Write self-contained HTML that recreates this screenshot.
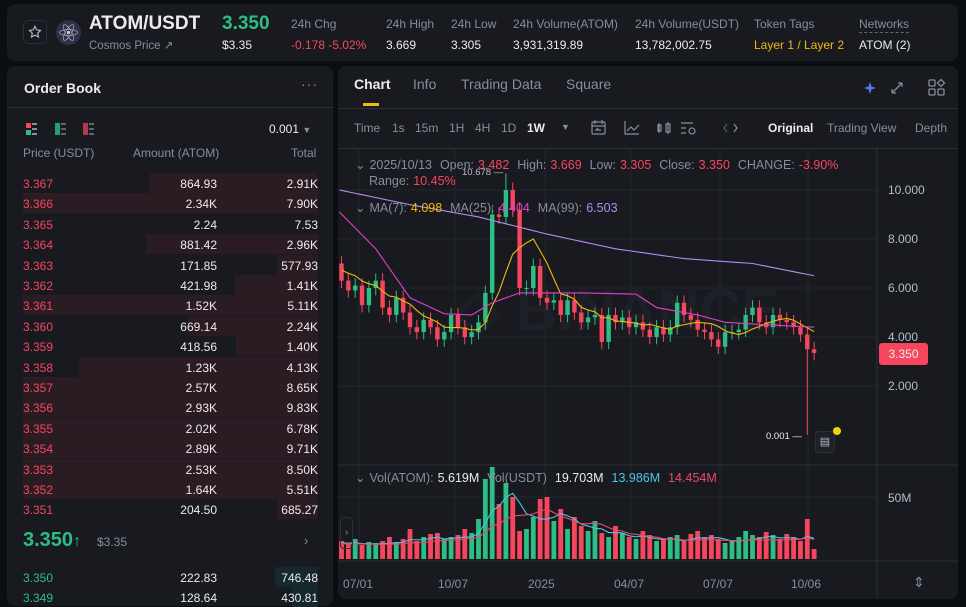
<!DOCTYPE html>
<html><head><meta charset="utf-8">
<style>
*{margin:0;padding:0;box-sizing:border-box}
body{width:966px;height:603px;background:#0b0e11;font-family:"Liberation Sans",sans-serif;color:#eaecef;position:relative;overflow:hidden;font-size:12px}
.p{position:absolute;background:#181a20;border-radius:8px}
.a{position:absolute;white-space:nowrap}
.g{color:#848e9c}.gr{color:#2ebd85}.rd{color:#f6465d}.y{color:#f0b90b}
.row{position:absolute;left:23px;width:295px;height:20px;font-size:12px}
.row .bar{position:absolute;top:0;right:0;height:20px;background:#2b1c23}
.row span{position:absolute;top:4px}
.lg{font-size:12.5px;word-spacing:0.5px}
</style></head><body>
<div class="p" style="left:7px;top:4px;width:951px;height:57px"></div>
<div class="a" style="left:23px;top:20px;width:24px;height:24px;border:1px solid #2b3139;border-radius:5px"></div>
<svg class="a" style="left:28px;top:25px" width="14" height="14" viewBox="0 0 14 14"><path d="M7 1.3l1.7 3.6 3.9.5-2.9 2.7.8 3.9L7 10.1 3.5 12l.8-3.9L1.4 5.4l3.9-.5z" fill="none" stroke="#b7bdc6" stroke-width="1.1"/></svg>
<svg class="a" style="left:56px;top:20px" width="25" height="25" viewBox="0 0 25 25"><circle cx="12.5" cy="12.5" r="12.5" fill="#2e3148"/><ellipse cx="12.5" cy="12.5" rx="9" ry="3" fill="none" stroke="#aab" stroke-width=".7"/><ellipse cx="12.5" cy="12.5" rx="9" ry="3" fill="none" stroke="#aab" stroke-width=".7" transform="rotate(60 12.5 12.5)"/><ellipse cx="12.5" cy="12.5" rx="9" ry="3" fill="none" stroke="#aab" stroke-width=".7" transform="rotate(-60 12.5 12.5)"/><circle cx="12.5" cy="12.5" r="1.6" fill="#ccd"/></svg>
<div class="a" style="left:89px;top:13px;font-size:19px;font-weight:bold">ATOM/USDT</div>
<div class="a g" style="left:89px;top:38px;font-size:11.5px">Cosmos Price ↗</div>
<div class="a gr" style="left:222px;top:13px;font-size:19px;font-weight:bold">3.350</div>
<div class="a" style="left:222px;top:38px;font-size:12px">$3.35</div>
<div class="a g" style="left:291px;top:17px">24h Chg</div><div class="a rd" style="left:291px;top:38px">-0.178 -5.02%</div>
<div class="a g" style="left:386px;top:17px">24h High</div><div class="a" style="left:386px;top:38px">3.669</div>
<div class="a g" style="left:451px;top:17px">24h Low</div><div class="a" style="left:451px;top:38px">3.305</div>
<div class="a g" style="left:513px;top:17px">24h Volume(ATOM)</div><div class="a" style="left:513px;top:38px">3,931,319.89</div>
<div class="a g" style="left:635px;top:17px">24h Volume(USDT)</div><div class="a" style="left:635px;top:38px">13,782,002.75</div>
<div class="a g" style="left:754px;top:17px">Token Tags</div><div class="a y" style="left:754px;top:38px">Layer 1 / Layer 2</div>
<div class="a g" style="left:859px;top:17px;border-bottom:1px dashed #5e6673;padding-bottom:1px">Networks</div><div class="a" style="left:859px;top:38px">ATOM (2)</div>

<div class="p" style="left:7px;top:66px;width:326px;height:540px"></div>
<div class="a" style="left:24px;top:80px;font-size:14px;font-weight:bold">Order Book</div>
<div class="a g" style="left:301px;top:76px;font-size:14px;letter-spacing:1px">···</div>
<div class="a" style="left:7px;top:107px;width:326px;height:1px;background:#2b3139"></div>
<svg class="a" style="left:26px;top:123px" width="70" height="12"><rect x="0" y="0" width="5" height="5" fill="#f6465d"/><rect x="0" y="7" width="5" height="5" fill="#2ebd85"/><rect x="6" y="0" width="5" height="2" fill="#848e9c"/><rect x="6" y="5" width="5" height="2" fill="#848e9c"/><rect x="6" y="10" width="5" height="2" fill="#848e9c"/><rect x="29" y="0" width="5" height="12" fill="#2ebd85" opacity=".8"/><rect x="35" y="0" width="5" height="2" fill="#5e6673"/><rect x="35" y="5" width="5" height="2" fill="#5e6673"/><rect x="35" y="10" width="5" height="2" fill="#5e6673"/><rect x="57" y="0" width="5" height="12" fill="#f6465d" opacity=".7"/><rect x="63" y="0" width="5" height="2" fill="#5e6673"/><rect x="63" y="5" width="5" height="2" fill="#5e6673"/><rect x="63" y="10" width="5" height="2" fill="#5e6673"/></svg>
<div class="a" style="left:269px;top:122px">0.001 <span class="g" style="font-size:9px">▼</span></div>
<div class="a g" style="left:23px;top:146px">Price (USDT)</div>
<div class="a g" style="left:133px;top:146px">Amount (ATOM)</div>
<div class="a g" style="left:291px;top:146px">Total</div>
<div id="ob"></div>
<div class="a gr" style="left:23px;top:529px;font-size:20px;font-weight:bold">3.350<span style="font-size:16px">↑</span></div>
<div class="a g" style="left:97px;top:535px">$3.35</div>
<div class="a g" style="left:304px;top:533px;font-size:13px">›</div>

<div class="p" style="left:338px;top:66px;width:620px;height:533px"></div>
<div class="a" style="left:354px;top:76px;font-size:14px;font-weight:bold">Chart</div>
<div class="a" style="left:363px;top:103px;width:16px;height:3px;background:#f0b90b"></div>
<div class="a g" style="left:413px;top:76px;font-size:14px">Info</div>
<div class="a g" style="left:461px;top:76px;font-size:14px">Trading Data</div>
<div class="a g" style="left:566px;top:76px;font-size:14px">Square</div>
<svg class="a" style="left:862px;top:79px" width="90" height="18"><path d="M8 3l1.5 4.5L14 9l-4.5 1.5L8 15l-1.5-4.5L2 9l4.5-1.5z" fill="#4e7cf6"/><path d="M30 14l10-10M30 14v-4M30 14h4M40 4h-4M40 4v4" stroke="#848e9c" stroke-width="1.3" fill="none"/><rect x="67" y="1" width="6" height="6" rx="1" fill="none" stroke="#848e9c" stroke-width="1.3"/><rect x="67" y="10" width="6" height="6" rx="1" fill="none" stroke="#848e9c" stroke-width="1.3"/><rect x="76" y="10" width="6" height="6" rx="1" fill="none" stroke="#848e9c" stroke-width="1.3"/><path d="M79 0.5l3.5 3.5L79 7.5 75.5 4z" fill="none" stroke="#848e9c" stroke-width="1.3"/></svg>
<div class="a" style="left:338px;top:108px;width:620px;height:1px;background:#2b3139"></div>
<div class="a g" style="left:354px;top:121px">Time</div>
<div class="a g" style="left:392px;top:121px">1s</div>
<div class="a g" style="left:415px;top:121px">15m</div>
<div class="a g" style="left:449px;top:121px">1H</div>
<div class="a g" style="left:475px;top:121px">4H</div>
<div class="a g" style="left:501px;top:121px">1D</div>
<div class="a" style="left:527px;top:121px;font-weight:bold">1W</div>
<div class="a g" style="left:561px;top:122px;font-size:9px">▼</div>
<svg class="a" style="left:590px;top:119px" width="155" height="18" fill="none" stroke="#848e9c" stroke-width="1.2"><rect x="2" y="3" width="13" height="12" rx="1"/><path d="M2 7h13M5 1v4M12 1v4M11 11H6l2-2"/><path d="M35 2v13h14M37 12l4-4 3 3 5-5"/><path d="M69 4v10M68 6h3v6h-3zM78 3v12M76 5h4v8h-4z"/><path d="M91 4h12M91 9h5M91 14h5"/><circle cx="102" cy="12" r="3"/><path d="M137 5l-3 4 3 4" opacity=".5"/><path d="M144 5l3 4-3 4"/></svg>
<div class="a" style="left:768px;top:121px;font-weight:bold">Original</div>
<div class="a g" style="left:827px;top:121px">Trading View</div>
<div class="a g" style="left:915px;top:121px">Depth</div>
<div class="a" style="left:338px;top:148px;width:620px;height:1px;background:#2b3139"></div>

<svg id="ch" class="a" style="left:0;top:0" width="966" height="603"></svg>

<div class="a g lg" style="left:355px;top:157px">⌄ 2025/10/13 &nbsp;Open: <span class="rd">3.482</span> &nbsp;High: <span class="rd">3.669</span> &nbsp;Low: <span class="rd">3.305</span> &nbsp;Close: <span class="rd">3.350</span> &nbsp;CHANGE: <span class="rd">-3.90%</span></div>
<div class="a g lg" style="left:369px;top:174px">Range: <span class="rd">10.45%</span></div>
<div class="a" style="left:462px;top:167px;font-size:9.5px;color:#b7bdc6">10.678 —</div>
<div class="a g lg" style="left:355px;top:200px">⌄ MA(7): <span class="y">4.098</span> &nbsp;MA(25): <span style="color:#e040c8">4.404</span> &nbsp;MA(99): <span style="color:#b58cf0">6.503</span></div>
<div class="a g lg" style="left:355px;top:470px">⌄ Vol(ATOM): <span style="color:#eaecef">5.619M</span> &nbsp;Vol(USDT) &nbsp;<span style="color:#eaecef">19.703M</span> &nbsp;<span style="color:#4fc3e0">13.986M</span> &nbsp;<span style="color:#e84a6e">14.454M</span></div>
<div class="a" style="left:888px;top:183px;font-size:12px;color:#b7bdc6">10.000</div>
<div class="a" style="left:888px;top:232px;font-size:12px;color:#b7bdc6">8.000</div>
<div class="a" style="left:888px;top:281px;font-size:12px;color:#b7bdc6">6.000</div>
<div class="a" style="left:888px;top:330px;font-size:12px;color:#b7bdc6">4.000</div>
<div class="a" style="left:888px;top:379px;font-size:12px;color:#b7bdc6">2.000</div>
<div class="a" style="left:888px;top:491px;font-size:12px;color:#b7bdc6">50M</div>
<div class="a" style="left:879px;top:343px;width:49px;height:22px;background:#f6465d;border-radius:3px;font-size:12px;text-align:center;line-height:22px">3.350</div>
<div class="a" style="left:766px;top:431px;font-size:9.5px">0.001 —</div>
<div class="a" style="left:815px;top:431px;width:20px;height:22px;border:1px solid #2b3139;border-radius:4px;background:#1e2026;color:#b7bdc6;font-size:11px;text-align:center;line-height:20px">▤</div>
<div class="a" style="left:833px;top:427px;width:8px;height:8px;border-radius:50%;background:#f0d20b"></div>
<div class="a" style="left:340px;top:517px;width:13px;height:32px;border:1px solid #2b3139;border-radius:4px;color:#848e9c;font-size:10px;text-align:center;line-height:30px">›</div>
<div class="a g" style="left:343px;top:577px">07/01</div>
<div class="a g" style="left:438px;top:577px">10/07</div>
<div class="a g" style="left:528px;top:577px">2025</div>
<div class="a g" style="left:614px;top:577px">04/07</div>
<div class="a g" style="left:703px;top:577px">07/07</div>
<div class="a g" style="left:791px;top:577px">10/06</div>
<div class="a g" style="left:913px;top:574px;font-size:14px">⇕</div>

<script>
var ob=[["3.367","864.93","2.91K",150],["3.366","2.34K","7.90K",23],["3.365","2.24","7.53",318],["3.364","881.42","2.96K",147],["3.363","171.85","577.93",278],["3.362","421.98","1.41K",235],["3.361","1.52K","5.11K",23],["3.360","669.14","2.24K",188],["3.359","418.56","1.40K",236],["3.358","1.23K","4.13K",79],["3.357","2.57K","8.65K",23],["3.356","2.93K","9.83K",23],["3.355","2.02K","6.78K",23],["3.354","2.89K","9.71K",23],["3.353","2.53K","8.50K",23],["3.352","1.64K","5.51K",23],["3.351","204.50","685.27",277]];
var h="";
ob.forEach(function(r,i){var t=173+i*20.4;h+='<div class="row" style="top:'+t+'px"><div class="bar" style="width:'+(318-r[3])+'px"></div><span class="rd" style="left:0">'+r[0]+'</span><span style="right:101px">'+r[1]+'</span><span style="right:0">'+r[2]+'</span></div>';});
[["3.350","222.83","746.48",275],["3.349","128.64","430.81",292]].forEach(function(r,i){var t=567+i*20.4;h+='<div class="row" style="top:'+t+'px"><div class="bar" style="background:#16292a;width:'+(318-r[3])+'px"></div><span class="gr" style="left:0">'+r[0]+'</span><span style="right:101px">'+r[1]+'</span><span style="right:0">'+r[2]+'</span></div>';});
document.getElementById("ob").innerHTML=h;
var C=[6.3,5.9,6.1,5.3,6.0,6.3,5.2,4.9,5.6,5.0,4.4,4.2,4.7,4.4,3.9,4.2,4.9,4.4,4.0,4.2,4.6,5.8,9.0,8.9,10.0,9.2,6.0,6.0,6.9,5.6,5.4,5.5,4.9,5.5,5.0,4.6,4.8,4.9,3.8,4.9,4.6,4.8,4.4,4.6,4.3,4.0,4.4,4.1,4.4,5.4,4.9,4.7,4.3,4.2,3.9,3.6,4.2,4.2,4.3,4.9,5.2,4.6,4.4,4.9,4.7,4.6,4.4,4.1,3.5,3.35];
var V=[18,16,20,14,17,16,18,22,17,20,30,18,22,25,26,20,22,24,30,26,40,80,92,55,76,62,28,30,42,60,62,38,50,30,42,33,28,38,26,22,33,26,22,20,28,24,18,20,22,24,18,25,28,22,24,20,16,18,22,28,24,22,27,24,20,25,22,18,40,10];
function X(i){return 341.5+i*6.85}function Y(p){return 435-24.5*p}
var s="";
[190,239,288,337,386].forEach(function(y){s+='<line x1="338" x2="877" y1="'+y+'" y2="'+y+'" stroke="#22252b"/>'});
s+='<line x1="338" x2="877" y1="497" y2="497" stroke="#22252b"/>';
[359,455,545,631,720,808].forEach(function(x){s+='<line x1="'+x+'" x2="'+x+'" y1="149" y2="561" stroke="#22252b"/>'});
s+='<line x1="877" x2="877" y1="149" y2="598" stroke="#2b3139"/><line x1="338" x2="958" y1="465" y2="465" stroke="#2b3139"/><line x1="338" x2="958" y1="561" y2="561" stroke="#2b3139"/>';
s+='<text x="455" y="330" font-family="Liberation Sans" font-weight="bold" font-size="58" fill="#1d2026">◇ BINANCE</text>';
for(var i=0;i<C.length;i++){var o=i?C[i-1]:7.0,c=C[i],up=c>=o,col=up?"#2ebd85":"#f6465d",hi=Math.max(o,c)+0.3,lo=Math.min(o,c)-0.3;if(i==24)hi=10.678;if(i==68)lo=0.001;var x=X(i);
s+='<line x1="'+x+'" x2="'+x+'" y1="'+Y(hi)+'" y2="'+Y(lo)+'" stroke="'+col+'"/>';var t=Y(Math.max(o,c)),b=Y(Math.min(o,c));s+='<rect x="'+(x-2.2)+'" y="'+t+'" width="4.4" height="'+Math.max(1,b-t)+'" fill="'+col+'"/>';
var vh=V[i];s+='<rect x="'+(x-2.4)+'" y="'+(559-vh)+'" width="4.8" height="'+vh+'" fill="'+col+'"/>';}
function pl(pts,col){return '<polyline fill="none" stroke="'+col+'" stroke-width="1.1" points="'+pts.join(" ")+'"/>'}
var m7=[];for(i=0;i<C.length;i++){var sm=0;for(var k=i-6;k<=i;k++)sm+=(k<0?6.8:C[k]);m7.push(X(i)+","+Y(sm/7));}
s+=pl(m7,"#f0b90b");
function kp(a,col){var p=[];for(var j=0;j<a.length-1;j++){for(var i=a[j][0];i<a[j+1][0];i++){var f=(i-a[j][0])/(a[j+1][0]-a[j][0]);p.push(X(i)+","+Y(a[j][1]+(a[j+1][1]-a[j][1])*f));}}var l=a[a.length-1];p.push(X(l[0])+","+Y(l[1]));return pl(p,col);}
s+=kp([[-0.3,9.1],[5,7.6],[10,5.6],[15,4.95],[19,4.9],[22,5.4],[26,5.8],[35,5.8],[43,5.75],[46,5.2],[52,4.9],[56,4.6],[62,4.5],[69,4.4]],"#e040c8");
s+=kp([[-0.3,10.0],[10,9.4],[20,8.9],[30,8.2],[40,7.6],[50,7.2],[60,7.0],[69,6.5]],"#b58cf0");
function vm(n,col,sh){var p=[];for(i=0;i<V.length;i++){var sm=0;for(var k=i-n+1;k<=i;k++)sm+=(k<0?18:V[k]);p.push(X(i)+","+(559-sm/n*sh));}return pl(p,col);}
s+=vm(5,"#4fc3e0",0.9);s+=vm(10,"#e84a6e",0.85);
document.getElementById("ch").innerHTML=s;
</script>
</body></html>
